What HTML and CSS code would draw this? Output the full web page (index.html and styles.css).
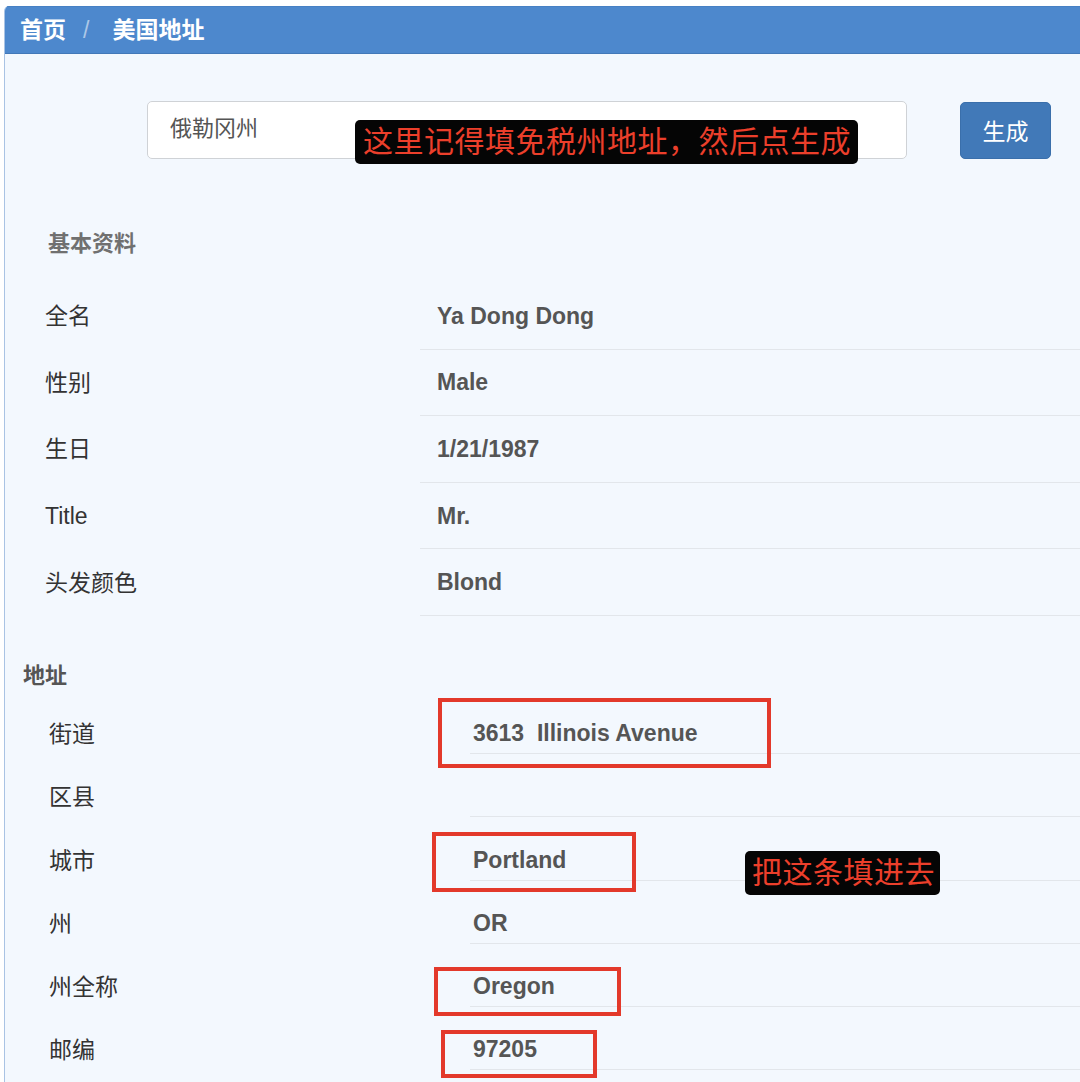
FILE: index.html
```html
<!DOCTYPE html>
<html lang="zh-CN">
<head>
<meta charset="utf-8">
<title>美国地址</title>
<link rel="stylesheet" href="styles.css">
</head>
<body>
<div class="card">
  <div class="card-header">
    <span class="crumb">首页</span><span class="sep">/</span><span class="crumb">美国地址</span>
  </div>
  <div class="card-body">
    <div class="search">
      <div class="input">俄勒冈州</div>
      <button class="btn">生成</button>
      <div class="note note-top">这里记得填免税州地址，然后点生成</div>
    </div>

    <div class="section-title">基本资料</div>
    <div class="basic">
      <div class="row"><div class="label">全名</div><div class="value">Ya Dong Dong</div></div>
      <div class="row"><div class="label">性别</div><div class="value">Male</div></div>
      <div class="row"><div class="label">生日</div><div class="value">1/21/1987</div></div>
      <div class="row"><div class="label">Title</div><div class="value">Mr.</div></div>
      <div class="row"><div class="label">头发颜色</div><div class="value">Blond</div></div>
    </div>

    <div class="section-title2">地址</div>
    <div class="addr">
      <div class="row"><div class="label">街道</div><div class="value">3613&nbsp; Illinois Avenue<span class="mark mark-street"></span></div></div>
      <div class="row"><div class="label">区县</div><div class="value"></div></div>
      <div class="row"><div class="label">城市</div><div class="value">Portland<span class="mark mark-city"></span><div class="note note-city">把这条填进去</div></div></div>
      <div class="row"><div class="label">州</div><div class="value">OR</div></div>
      <div class="row"><div class="label">州全称</div><div class="value">Oregon<span class="mark mark-state"></span></div></div>
      <div class="row"><div class="label">邮编</div><div class="value">97205<span class="mark mark-zip"></span></div></div>
    </div>
  </div>
</div>
</body>
</html>
```

FILE: styles.css
```css
html, body {
  margin: 0;
  padding: 0;
  background: #ffffff;
  overflow: hidden;
}

body {
  font-family: "Liberation Sans", "Noto Sans CJK SC", sans-serif;
  color: #333;
}

.card {
  margin: 6px 0 0 4px;
  background: #f3f8fe;
  border-left: 1px solid #a9c3e4;
  border-top-left-radius: 5px;
  overflow: hidden;
  height: 1100px;
}

.card-header {
  height: 46px;
  background: #4d88cd;
  border-top: 1px solid #4680c4;
  border-bottom: 1px solid #4278b8;
  padding-left: 15px;
  display: flex;
  align-items: center;
  color: #fff;
  font-weight: bold;
  font-size: 23px;
  line-height: 46px;
}

.sep {
  color: rgba(255, 255, 255, 0.55);
  font-weight: normal;
  margin: 0 23px 0 17px;
}

.card-body {
  padding: 0;
}

.search {
  position: relative;
  display: flex;
  align-items: center;
  gap: 53px;
  margin-top: 47px;
  padding-left: 142px;
}

.input {
  box-sizing: border-box;
  width: 760px;
  height: 58px;
  background: #fff;
  border: 1px solid #cfd2d6;
  border-radius: 5px;
  padding-left: 22px;
  font-size: 22px;
  line-height: 54px;
  color: #555;
}

.btn {
  box-sizing: border-box;
  width: 91px;
  height: 57px;
  background: #4179b8;
  border: 1px solid #3a6fab;
  border-radius: 5px;
  color: #fff;
  font-family: "Liberation Sans", "Noto Sans CJK SC", sans-serif;
  font-size: 23px;
  padding: 0;
}

.note {
  position: absolute;
  background: #050505;
  color: #ec3f2b;
  border-radius: 5px;
  font-size: 30px;
  letter-spacing: 0.5px;
  height: 44px;
  line-height: 44px;
  white-space: nowrap;
  box-sizing: border-box;
  font-weight: normal;
}

.note-top {
  left: 350px;
  top: 19px;
  width: 503px;
  padding-left: 8px;
}

.section-title {
  margin-top: 70px;
  padding-left: 43px;
  font-size: 22px;
  line-height: 30px;
  color: #707070;
  font-weight: 600;
}

.basic {
  margin-top: 24px;
}

.row {
  display: flex;
  font-size: 23px;
  line-height: 30px;
}

.label {
  color: #333;
}

.value {
  position: relative;
  flex: 1;
  border-bottom: 1px solid #e2e6eb;
  color: #555;
  font-weight: bold;
}

.basic .row {
  height: 66.6px;
}

.basic .label {
  width: 375px;
  padding-left: 40px;
  display: flex;
  align-items: center;
}

.basic .value {
  padding-left: 17px;
  display: flex;
  align-items: center;
}

.section-title2 {
  margin-top: 45px;
  padding-left: 18px;
  font-size: 22px;
  line-height: 30px;
  color: #555;
  font-weight: 600;
}

.addr .row {
  height: 63.2px;
}

.addr .label {
  width: 421px;
  padding-left: 44px;
  display: flex;
  align-items: flex-end;
  padding-bottom: 5px;
}

.addr .value {
  padding-left: 3px;
  display: flex;
  align-items: flex-end;
  padding-bottom: 5px;
}

.mark {
  position: absolute;
  box-sizing: border-box;
  border: 4px solid #e3392b;
}

.mark-street {
  left: -32px;
  top: 7px;
  width: 333px;
  height: 70px;
}

.mark-city {
  left: -38px;
  top: 15px;
  width: 204px;
  height: 60px;
}

.mark-state {
  left: -36px;
  top: 23px;
  width: 187px;
  height: 49px;
}

.mark-zip {
  left: -29px;
  top: 23px;
  width: 156px;
  height: 48px;
}

.note-city {
  left: 275px;
  top: 34px;
  width: 195px;
  padding-left: 7px;
}
```
